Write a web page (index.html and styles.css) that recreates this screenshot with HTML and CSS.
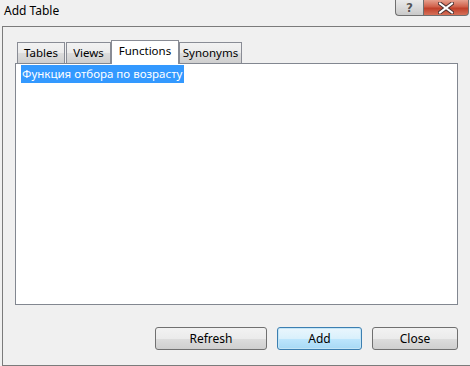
FILE: index.html
```html
<!DOCTYPE html>
<html lang="en">
<head>
	<meta charset="UTF-8">
	<title>Add Table</title>
	<link rel="stylesheet" href="styles.css">
</head>
<body>
	<div class="window">
		<div class="titlebar">
			<span class="title">Add Table</span>
			<div class="caption">
				<span class="cap-help">?</span>
				<span class="cap-close">
					<svg width="16" height="12" viewBox="0 0 16 12">
						<path d="M2 1.5 L14 10.5 M14 1.5 L2 10.5" stroke="#4a3030" stroke-width="4" stroke-linecap="square"/>
						<path d="M2 1.5 L14 10.5 M14 1.5 L2 10.5" stroke="#fff" stroke-width="2" stroke-linecap="square"/>
					</svg>
				</span>
			</div>
		</div>
		<div class="frame">
			<ul class="tabs">
				<li class="tab tab-tables">Tables</li>
				<li class="tab tab-views">Views</li>
				<li class="tab tab-functions active">Functions</li>
				<li class="tab tab-synonyms">Synonyms</li>
			</ul>
			<div class="panel">
				<ul class="list">
					<li class="selected">Функция отбора по возрасту</li>
				</ul>
			</div>
			<div class="buttons">
				<button class="btn btn-refresh">Refresh</button>
				<button class="btn btn-add default">Add</button>
				<button class="btn btn-close">Close</button>
			</div>
		</div>
	</div>
</body>
</html>
```
FILE: styles.css
```css
*{margin: 0; padding: 0; box-sizing: border-box;}
ul, li{list-style: none;}
body{background: #f0f0f0; font-family: "Noto Sans", "Liberation Sans", sans-serif; font-size: 12px; color: #000;}

.window{width: 470px; height: 366px; overflow: hidden;}

.titlebar{height: 26px; display: flex; justify-content: space-between; align-items: flex-start;}
.title{padding: 3px 0 0 4px; line-height: 16px; font-size: 12px;}
.caption{display: flex; margin-right: 1px;}
.cap-help, .cap-close{height: 16px; display: flex; align-items: center; justify-content: center; border: 1px solid #6f6f6f; border-top: none;}
.cap-help{width: 28px; border-radius: 0 0 0 4px; border-right: none; background: linear-gradient(#eaeaea, #dadada 50%, #c9c9c9); font-family: "DejaVu Sans", sans-serif; font-weight: bold; font-size: 12px; color: #555; text-shadow: 0 0 1px #fff;}
.cap-close{width: 46px; border-radius: 0 0 4px 0; background: linear-gradient(#e6a08e, #d0604a 45%, #c0402a 55%, #d67058);}

.frame{margin-left: 2px; height: 340px; border: 1px solid #7b7b7b; border-right: none; padding: 13px 0 0 12px;}

.tabs{display: flex; align-items: flex-end; height: 23px; padding-left: 2px; font-size: 11.5px;}
.tab{height: 21px; line-height: 19px; text-align: center; border: 1px solid #898c95; border-bottom: none; background: linear-gradient(#f2f2f2, #ebebeb 50%, #dddddd 50%, #cfcfcf);}
.tab-tables{width: 48px; margin-right: 1px;}
.tab-views{width: 45px;}
.tab-functions{width: 68px;}
.tab-synonyms{width: 63px;}
.tab.active{height: 24px; margin-bottom: -1px; position: relative; background: #fff; line-height: 20px;}

.panel{width: 443px; height: 242px; border: 1px solid #828790; background: #fff; padding: 1px 0 0 5px;}
.list li{display: inline-block; height: 18px; line-height: 17px; padding: 0 2px 0 1px; font-size: 11.5px;}
.list li.selected{background: #3399ff; color: #fff;}

.buttons{width: 443px; display: flex; justify-content: flex-end; gap: 10px; margin-top: 22px;}
.btn{height: 23px; border: 1px solid #707070; border-radius: 3px; background: linear-gradient(#f2f2f2, #ebebeb 50%, #dddddd 50%, #cfcfcf); font-family: inherit; font-size: 12px; color: #000;}
.btn-refresh{width: 112px;}
.btn-add{width: 85px;}
.btn-close{width: 86px;}
.btn.default{border-color: #3c7fb1; background: linear-gradient(#eaf6fd, #d9f0fc 50%, #bee6fd 50%, #a7d9f5); box-shadow: inset 0 0 0 1px #c4e5f6;}
```
